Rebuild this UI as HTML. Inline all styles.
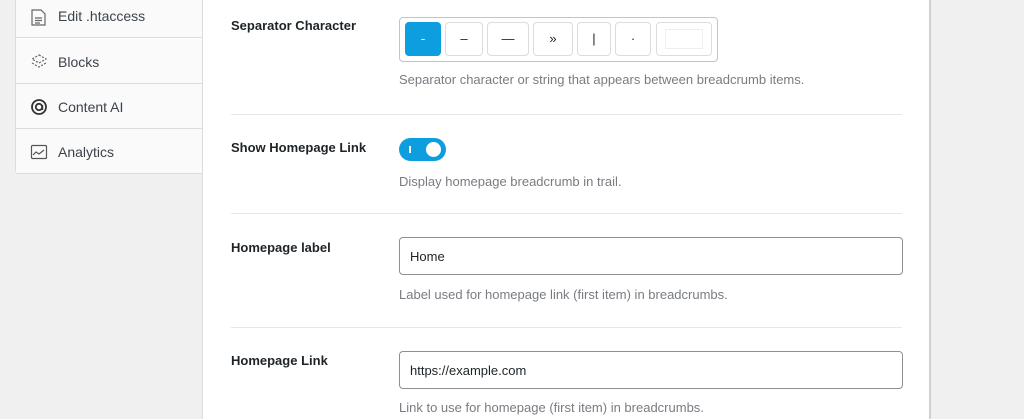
<!DOCTYPE html>
<html><head><style>
*{box-sizing:border-box;margin:0;padding:0}
body{width:1024px;height:419px;overflow:hidden;background:#f0f0f1;font-family:"Liberation Sans",sans-serif;position:relative;color:#1d2327}
.side{position:absolute;left:15px;top:-8px;width:188px;height:181px;background:#fff;border:1px solid #dcdcde;border-radius:0 0 0 3px}
.item{position:absolute;left:0;width:187px;height:45px;border-bottom:1px solid #dcdcde;background:#fafafa;font-size:14px;color:#3c434a}
.item span{position:absolute;left:42px;top:15px}
.item svg{position:absolute;left:14px;top:14px}
.main{position:absolute;left:202px;top:0;width:729px;height:419px;background:#fff;border-left:1px solid #dcdcde;border-right:2px solid #cfd1d4}
.lbl{position:absolute;left:231px;font-size:13px;font-weight:bold;color:#1d2327}
.desc{position:absolute;left:399px;font-size:13px;color:#787c82}
.hr{position:absolute;left:231px;width:671px;height:1px;background:#e5e8ea}
.inp{position:absolute;left:399px;width:504px;height:38px;border:1px solid #8c8f94;border-radius:4px;font-size:13px;padding:11px 0 0 10px;color:#1d2327}
.grp{position:absolute;left:399px;top:17px;width:319px;height:45px;border:1px solid #c3c4c7;border-radius:4px}
.b{position:absolute;top:22px;height:34px;border:1px solid #dcdcde;border-radius:4px;font-size:13px;text-align:center;line-height:32px;color:#1d2327}
</style></head><body>
<div class="side">
 <div class="item" style="top:0"><svg width="18" height="20" viewBox="0 0 18 20" fill="none" stroke="#666" stroke-width="1.2"><path d="M2 3h9l4 4v11H2z"/><path d="M5 11h7M5 13.5h7M5 16h5"/></svg><span>Edit .htaccess</span></div>
 <div class="item" style="top:46px"><svg width="18" height="18" viewBox="0 0 18 18" fill="none" stroke="#666" stroke-width="1.2" stroke-dasharray="2 1.5"><path d="M9 2l7 4-7 4-7-4z"/><path d="M2 10l7 4 7-4"/></svg><span>Blocks</span></div>
 <div class="item" style="top:91px"><svg width="18" height="18" viewBox="0 0 18 18" fill="none" stroke="#333" stroke-width="1.8"><circle cx="9" cy="9" r="7"/><circle cx="9" cy="9" r="3.2"/><path d="M12.3 7v5"/></svg><span>Content AI</span></div>
 <div class="item" style="top:136px"><svg width="18" height="18" viewBox="0 0 18 18" fill="none" stroke="#555" stroke-width="1.2"><rect x="1.5" y="2.5" width="15" height="13" rx="1"/><path d="M3 12l3-3 3 2 5-4"/></svg><span>Analytics</span></div>
</div>
<div class="main"></div>
<div class="lbl" style="top:18px">Separator Character</div>
<div class="grp"></div>
<div class="b" style="left:405px;width:36px;background:#0d9ee0;border-color:#0d9ee0;color:#fff">-</div>
<div class="b" style="left:445px;width:38px">–</div>
<div class="b" style="left:487px;width:42px">—</div>
<div class="b" style="left:533px;width:40px">»</div>
<div class="b" style="left:577px;width:34px">|</div>
<div class="b" style="left:615px;width:36px">·</div>
<div class="b" style="left:656px;width:56px"><div style="position:absolute;left:8px;top:6px;width:38px;height:20px;border:1px solid #eee"></div></div>
<div class="desc" style="top:72px">Separator character or string that appears between breadcrumb items.</div>
<div class="hr" style="top:114px"></div>
<div class="lbl" style="top:140px">Show Homepage Link</div>
<div style="position:absolute;left:399px;top:138px;width:47px;height:23px;border-radius:12px;background:#0d9ee0"><div style="position:absolute;left:10px;top:8px;width:2px;height:7px;background:#fff"></div><div style="position:absolute;left:27px;top:4px;width:15px;height:15px;border-radius:50%;background:#fff"></div></div>
<div class="desc" style="top:174px">Display homepage breadcrumb in trail.</div>
<div class="hr" style="top:213px"></div>
<div class="lbl" style="top:240px">Homepage label</div>
<div class="inp" style="top:237px">Home</div>
<div class="desc" style="top:287px">Label used for homepage link (first item) in breadcrumbs.</div>
<div class="hr" style="top:327px"></div>
<div class="lbl" style="top:353px">Homepage Link</div>
<div class="inp" style="top:351px">https://example.com</div>
<div class="desc" style="top:400px">Link to use for homepage (first item) in breadcrumbs.</div>
</body></html>
